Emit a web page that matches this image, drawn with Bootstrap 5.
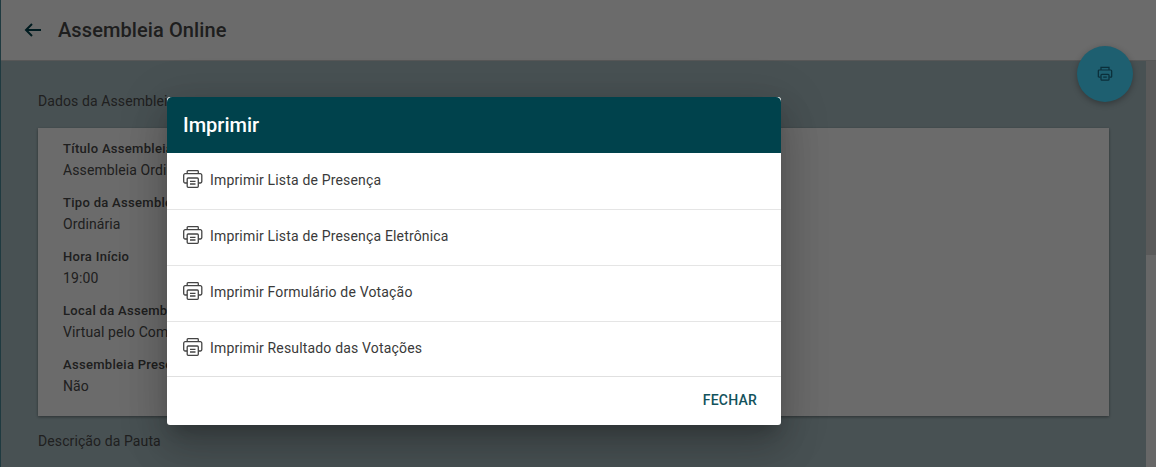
<!DOCTYPE html>
<html lang="pt-BR">
<head>
<meta charset="utf-8">
<link href="https://cdn.jsdelivr.net/npm/bootstrap@5.3.0/dist/css/bootstrap.min.css" rel="stylesheet">
<style>
html,body{height:467px;overflow:hidden;margin:0}
body{font-family:Roboto,"Liberation Sans",sans-serif;color:#212121;background:#adc2c7}
.shell{height:467px;border-left:1px solid #1f3a40;position:relative;overflow:hidden}
.topbar{height:61px;background:#fff;border-bottom:1px solid #cfcfcf;padding-left:23px;gap:16px}
.topbar h1{font-size:20px;font-weight:500;margin:0;letter-spacing:.1px;color:#484848}
.body-area{padding:30px 47px 0 37px}
.sect-label{font-size:14px;line-height:20px;color:#4c4c4c;letter-spacing:.1px}
.info-card{margin-top:17px;height:288px;background:#fff;box-shadow:0 1px 3px rgba(0,0,0,.4);padding:11px 25px 0;border-radius:0;border:0;margin-bottom:15px}
.fld{height:54px;font-size:14px;line-height:20px;letter-spacing:.1px}
.fld-t{font-size:13px;font-weight:500;line-height:17px;color:#4a4a4a;padding-top:1px;letter-spacing:.3px}
.fld-v{line-height:20px;padding-top:3px;color:#4c4c4c}
.fab-btn{position:absolute;left:1076px;top:46px;width:56px;height:56px;border-radius:50%;background:#1e5f70;border:0;padding:0;box-shadow:0 2px 6px rgba(0,0,0,.3);z-index:2}
.scroll-track{position:absolute;right:0;top:61px;bottom:0;width:10px;background:#f5f5f5}
.scroll-thumb{position:absolute;right:0;top:61px;height:194px;width:10px;background:#d6d6d6}
.dim{position:absolute;inset:0;background:rgba(0,0,0,.58)}
.dlg{position:absolute;left:166px;top:97px;width:614px;height:328px;border:0;border-radius:3px;overflow:hidden;z-index:3;box-shadow:0 11px 15px -7px rgba(0,0,0,.2),0 24px 38px 3px rgba(0,0,0,.14),0 9px 46px 8px rgba(0,0,0,.12)}
.dlg-head{height:56px;background:#00424c;color:#fff;font-size:20px;font-weight:500;padding:0 16px;border:0;border-radius:0}
.print-list{border-radius:0}
.print-item{height:56px;padding:0 16px 3px;gap:7px;font-size:14px;letter-spacing:.17px;color:#3a3a3a;border-left:0;border-right:0;border-top:0;border-color:#e5e5e5}
.print-item:first-child{height:57px;padding-bottom:2px}
.print-item:last-child{height:54px;border-bottom:0;padding-bottom:2px}
.print-item svg{margin-top:-3px}
.dlg-foot{flex:1;border-top:1px solid #e0e0e0;padding:0 24px 0 0}
.close-btn{font-size:14px;font-weight:500;color:#13525c;letter-spacing:.22px;padding:0;border:0;line-height:20px;border-radius:0;margin-top:-2px}
</style>
</head>
<body>
<div class="shell">
  <div class="topbar d-flex align-items-center">
    <svg width="18" height="14" viewBox="0 0 18 14" fill="none" stroke="#00424c" stroke-width="2"><path d="M17 7H2M8 1 2 7l6 6"/></svg>
    <h1>Assembleia Online</h1>
  </div>
  <div class="body-area">
    <div class="sect-label">Dados da Assembleia</div>
    <div class="card info-card">
      <div class="fld"><div class="fld-t">Título Assembleia</div><div class="fld-v">Assembleia Ordinária</div></div>
      <div class="fld"><div class="fld-t">Tipo da Assembleia</div><div class="fld-v">Ordinária</div></div>
      <div class="fld"><div class="fld-t">Hora Início</div><div class="fld-v">19:00</div></div>
      <div class="fld"><div class="fld-t">Local da Assembleia</div><div class="fld-v">Virtual pelo Computador</div></div>
      <div class="fld"><div class="fld-t">Assembleia Presencial</div><div class="fld-v">Não</div></div>
    </div>
    <div class="sect-label">Descrição da Pauta</div>
  </div>
  <div class="scroll-track"></div>
  <div class="scroll-thumb"></div>
  <div class="dim"></div>
  <button class="fab-btn d-flex align-items-center justify-content-center" type="button" aria-label="Imprimir">
    <svg width="16" height="16" viewBox="0 0 18 18" fill="none" stroke="#0b2f3a" stroke-width="1.400"><path d="M4.500 4.500V1.500h9v3M4 12.500H2.200A.7.7 0 0 1 1.500 11.800V5.500a1 1 0 0 1 1-1h13a1 1 0 0 1 1 1v6.300a.7.7 0 0 1-.7.7H14"/><rect x="4.500" y="9.500" width="9" height="6.500" rx="1"/><path d="M7 12.500h4"/></svg>
  </button>
  <div class="card dlg">
    <div class="card-header dlg-head d-flex align-items-center">Imprimir</div>
    <div class="list-group list-group-flush print-list">
      <div class="list-group-item print-item d-flex align-items-center"><svg width="20" height="18" viewBox="0 0 20 18" fill="none" stroke="#444" stroke-width="1.300"><path d="M4.200 3.700V1.500q0-.8.8-.8h9.500q.8 0 .8.8v2.200M4.200 13H2.200A1.500 1.500 0 0 1 .7 11.500V5.200A1.500 1.500 0 0 1 2.200 3.700h15.100a1.500 1.500 0 0 1 1.500 1.500v6.300a1.500 1.500 0 0 1-1.500 1.500h-2"/><rect x="4.200" y="8" width="11.100" height="9.300" rx="1"/><path d="M7 11.300h5.500M7 14h5.500"/></svg><span>Imprimir Lista de Presença</span></div>
      <div class="list-group-item print-item d-flex align-items-center"><svg width="20" height="18" viewBox="0 0 20 18" fill="none" stroke="#444" stroke-width="1.300"><path d="M4.200 3.700V1.500q0-.8.8-.8h9.500q.8 0 .8.8v2.200M4.200 13H2.200A1.500 1.500 0 0 1 .7 11.500V5.200A1.500 1.500 0 0 1 2.200 3.700h15.100a1.500 1.500 0 0 1 1.500 1.500v6.300a1.500 1.500 0 0 1-1.500 1.500h-2"/><rect x="4.200" y="8" width="11.100" height="9.300" rx="1"/><path d="M7 11.300h5.500M7 14h5.500"/></svg><span>Imprimir Lista de Presença Eletrônica</span></div>
      <div class="list-group-item print-item d-flex align-items-center"><svg width="20" height="18" viewBox="0 0 20 18" fill="none" stroke="#444" stroke-width="1.300"><path d="M4.200 3.700V1.500q0-.8.8-.8h9.500q.8 0 .8.8v2.200M4.200 13H2.200A1.500 1.500 0 0 1 .7 11.500V5.200A1.500 1.500 0 0 1 2.200 3.700h15.100a1.500 1.500 0 0 1 1.500 1.500v6.300a1.500 1.500 0 0 1-1.500 1.500h-2"/><rect x="4.200" y="8" width="11.100" height="9.300" rx="1"/><path d="M7 11.300h5.500M7 14h5.500"/></svg><span>Imprimir Formulário de Votação</span></div>
      <div class="list-group-item print-item d-flex align-items-center"><svg width="20" height="18" viewBox="0 0 20 18" fill="none" stroke="#444" stroke-width="1.300"><path d="M4.200 3.700V1.500q0-.8.8-.8h9.500q.8 0 .8.8v2.200M4.200 13H2.200A1.500 1.500 0 0 1 .7 11.500V5.200A1.500 1.500 0 0 1 2.200 3.700h15.100a1.500 1.500 0 0 1 1.500 1.500v6.300a1.500 1.500 0 0 1-1.500 1.500h-2"/><rect x="4.200" y="8" width="11.100" height="9.300" rx="1"/><path d="M7 11.300h5.500M7 14h5.500"/></svg><span>Imprimir Resultado das Votações</span></div>
    </div>
    <div class="dlg-foot d-flex align-items-center justify-content-end"><button type="button" class="btn close-btn">FECHAR</button></div>
  </div>
</div>
<script src="https://cdn.jsdelivr.net/npm/bootstrap@5.3.0/dist/js/bootstrap.bundle.min.js"></script>
</body>
</html>
